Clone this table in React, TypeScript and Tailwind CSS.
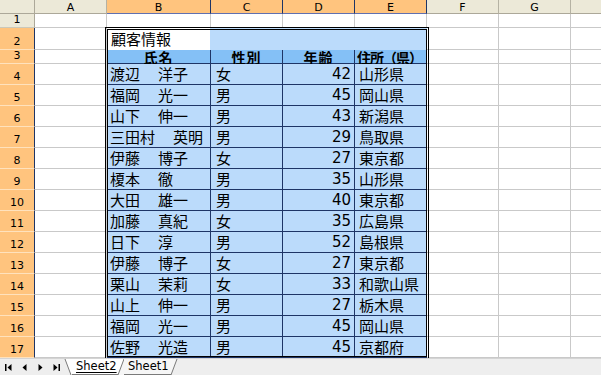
import React from "react";

type Person = { name: string; sex: string; age: number; pref: string };

const people: Person[] = [
  { name: "渡辺　洋子", sex: "女", age: 42, pref: "山形県" },
  { name: "福岡　光一", sex: "男", age: 45, pref: "岡山県" },
  { name: "山下　伸一", sex: "男", age: 43, pref: "新潟県" },
  { name: "三田村　英明", sex: "男", age: 29, pref: "鳥取県" },
  { name: "伊藤　博子", sex: "女", age: 27, pref: "東京都" },
  { name: "榎本　徹", sex: "男", age: 35, pref: "山形県" },
  { name: "大田　雄一", sex: "男", age: 40, pref: "東京都" },
  { name: "加藤　真紀", sex: "女", age: 35, pref: "広島県" },
  { name: "日下　淳", sex: "男", age: 52, pref: "島根県" },
  { name: "伊藤　博子", sex: "女", age: 27, pref: "東京都" },
  { name: "栗山　茉莉", sex: "女", age: 33, pref: "和歌山県" },
  { name: "山上　伸一", sex: "男", age: 27, pref: "栃木県" },
  { name: "福岡　光一", sex: "男", age: 45, pref: "岡山県" },
  { name: "佐野　光造", sex: "男", age: 45, pref: "京都府" },
];

const COLS = ["A", "B", "C", "D", "E", "F", "G", "H"];
const HILITE = ["B", "C", "D", "E"];

// same track sizes for the sheet and the outline layer
const tracks =
  "grid grid-cols-[35px_72px_104px_72px_72px_72px_72px_72px_72px] grid-rows-[14px_14px_22px_14px_repeat(14,21px)] w-[635px] col-start-1 row-start-1";

const plain = "bg-white border-r border-b border-[#c9c9c9]";
const cell = "bg-[#bbdbfb] border-r border-b border-[#1e3566] flex items-center overflow-hidden whitespace-nowrap";
const head = "bg-[#84c0f6] border-r border-b border-[#1e3566] flex items-center justify-center overflow-visible whitespace-nowrap font-bold text-[14px] leading-none";

const ColHeader = ({ col }: { col: string }) => {
  const on = HILITE.includes(col);
  return (
    <div
      className={
        on
          ? "bg-[#ffc47e] border-r border-r-[#1e3566] border-b border-b-[#6070b0] flex items-center justify-center text-[11px] leading-none pt-[1px]"
          : "bg-[#ece9d8] border-r border-r-[#b5b2a3] border-b border-b-[#aca899] flex items-center justify-center text-[11px] leading-none pt-[1px]"
      }
    >
      {col}
    </div>
  );
};

const RowHeader = ({ n }: { n: number }) => (
  <div
    className={
      n >= 2
        ? "bg-[#ffc47e] border-r border-r-[#1e3566] border-b border-b-[#ffe2bd] flex items-end justify-center pb-[2px] text-[11px] leading-none"
        : "bg-[#ece9d8] border-r border-r-[#aca899] border-b border-b-[#cbc8b9] flex items-end justify-center pb-[2px] text-[11px] leading-none"
    }
  >
    {n}
  </div>
);

const Name = ({ name }: { name: string }) => {
  const [a, b] = name.split("　");
  return (
    <>
      {a}
      <span className="inline-block w-[18px]">　</span>
      {b}
    </>
  );
};

const Blanks = ({ cols }: { cols: string[] }) => (
  <>
    {cols.map((c) => (
      <div key={c} className={plain} />
    ))}
  </>
);

const Nav = ({ kind }: { kind: "first" | "prev" | "next" | "last" }) => (
  <div className="w-[16px] h-full flex items-center justify-center">
    <svg width="7" height="7" viewBox="0 0 7 7">
      {kind === "first" && (
        <>
          <rect x="0" y="0" width="1.5" height="7" fill="#000" />
          <polygon points="2.5,3.5 6.5,0 6.5,7" fill="#000" />
        </>
      )}
      {kind === "prev" && <polygon points="1.5,3.5 5.5,0 5.5,7" fill="#000" />}
      {kind === "next" && <polygon points="1.5,0 5.5,3.5 1.5,7" fill="#000" />}
      {kind === "last" && (
        <>
          <polygon points="0.5,0 4.5,3.5 0.5,7" fill="#000" />
          <rect x="5.5" y="0" width="1.5" height="7" fill="#000" />
        </>
      )}
    </svg>
  </div>
);

const TabBar = () => (
  <div className="h-[17px] bg-[#eeeeee] border-t border-[#d4d4d4] flex items-stretch font-['DejaVu_Sans',sans-serif] text-[11.5px] leading-none text-black">
    <Nav kind="first" />
    <Nav kind="prev" />
    <Nav kind="next" />
    <Nav kind="last" />
    <svg width="8" height="16" viewBox="0 0 8 16" className="block">
      <polygon points="1,0 8,0 8,16 7,16" fill="#fff" />
      <line x1="1" y1="0" x2="7" y2="16" stroke="#7a7a7a" strokeWidth="1" />
    </svg>
    <div className="w-[46px] bg-white flex items-center pl-[4px] border-b border-[#7a7a7a]">
      <span className="underline underline-offset-[2px]">Sheet2</span>
    </div>
    <svg width="6" height="16" viewBox="0 0 6 16" className="block">
      <polygon points="0,0 6,0 0,16" fill="#fff" />
      <polygon points="6,0 6,16 0,16" fill="#f6f6f6" />
      <line x1="0" y1="16" x2="6" y2="0" stroke="#7a7a7a" strokeWidth="1" />
    </svg>
    <div className="w-[47px] bg-[#f6f6f6] flex items-center pl-[4px] border-b border-[#7a7a7a]">
      Sheet1
    </div>
    <svg width="7" height="16" viewBox="0 0 7 16" className="block">
      <polygon points="0,0 6,0 0,16" fill="#f6f6f6" />
      <line x1="0" y1="16" x2="6" y2="0" stroke="#7a7a7a" strokeWidth="1" />
    </svg>
  </div>
);

export default function App() {
  return (
    <div className="w-[601px] h-[375px] overflow-hidden bg-white flex flex-col font-['DejaVu_Sans',sans-serif] text-black">
      <div className="grid shrink-0">
        <div className={tracks}>
          {/* column headers */}
          <div className="bg-[#ece9d8] border-r border-b border-[#aca899]" />
          {COLS.map((c) => (
            <ColHeader key={c} col={c} />
          ))}

          {/* row 1 */}
          <RowHeader n={1} />
          <Blanks cols={COLS} />

          {/* row 2 */}
          <RowHeader n={2} />
          <div className={plain} />
          <div className="bg-white border-r border-r-[#bbdbfb] flex items-center pl-[4px] text-[15px] font-['Noto_Sans_CJK_JP',sans-serif] leading-none pb-[1px]">
            顧客情報
          </div>
          <div className="bg-[#bbdbfb]" />
          <div className="bg-[#bbdbfb]" />
          <div className="bg-[#bbdbfb]" />
          <Blanks cols={["F", "G", "H"]} />

          {/* row 3 */}
          <RowHeader n={3} />
          <div className={plain} />
          <div className={`${head} font-['Noto_Sans_CJK_JP',sans-serif] tracking-[1px]`}>氏名</div>
          <div className={`${head} font-['Noto_Sans_CJK_JP',sans-serif] tracking-[1px]`}>性別</div>
          <div className={`${head} font-['Noto_Sans_CJK_JP',sans-serif] tracking-[1px]`}>年齢</div>
          <div className={`${head} font-['Noto_Sans_CJK_JP',sans-serif] justify-start pl-[2px] tracking-[-1px]`}>住所（県）</div>
          <Blanks cols={["F", "G", "H"]} />

          {/* rows 4-17 */}
          {people.map((p, i) => (
            <React.Fragment key={i}>
              <RowHeader n={i + 4} />
              <div className={plain} />
              <div className={`${cell} pl-[3px] text-[15px] font-['Noto_Sans_CJK_JP',sans-serif]`}>
                <Name name={p.name} />
              </div>
              <div className={`${cell} pl-[5px] text-[15px] font-['Noto_Sans_CJK_JP',sans-serif]`}>{p.sex}</div>
              <div className={`${cell} justify-end pr-[3px] text-[15px] font-['DejaVu_Sans',sans-serif]`}>{p.age}</div>
              <div className={`${cell} pl-[4px] text-[15px] font-['Noto_Sans_CJK_JP',sans-serif] overflow-visible`}>{p.pref}</div>
              <Blanks cols={["F", "G", "H"]} />
            </React.Fragment>
          ))}
        </div>

        {/* thick outline around B2:E17, laid on the same tracks */}
        <div className={`${tracks} pointer-events-none`}>
          <div className="col-start-3 col-end-7 row-start-3 row-end-19 ml-[-2px] mr-[-2px] mt-[-1px] mb-[-1px] border-[3px] border-double border-black" />
        </div>
      </div>
      <TabBar />
    </div>
  );
}
